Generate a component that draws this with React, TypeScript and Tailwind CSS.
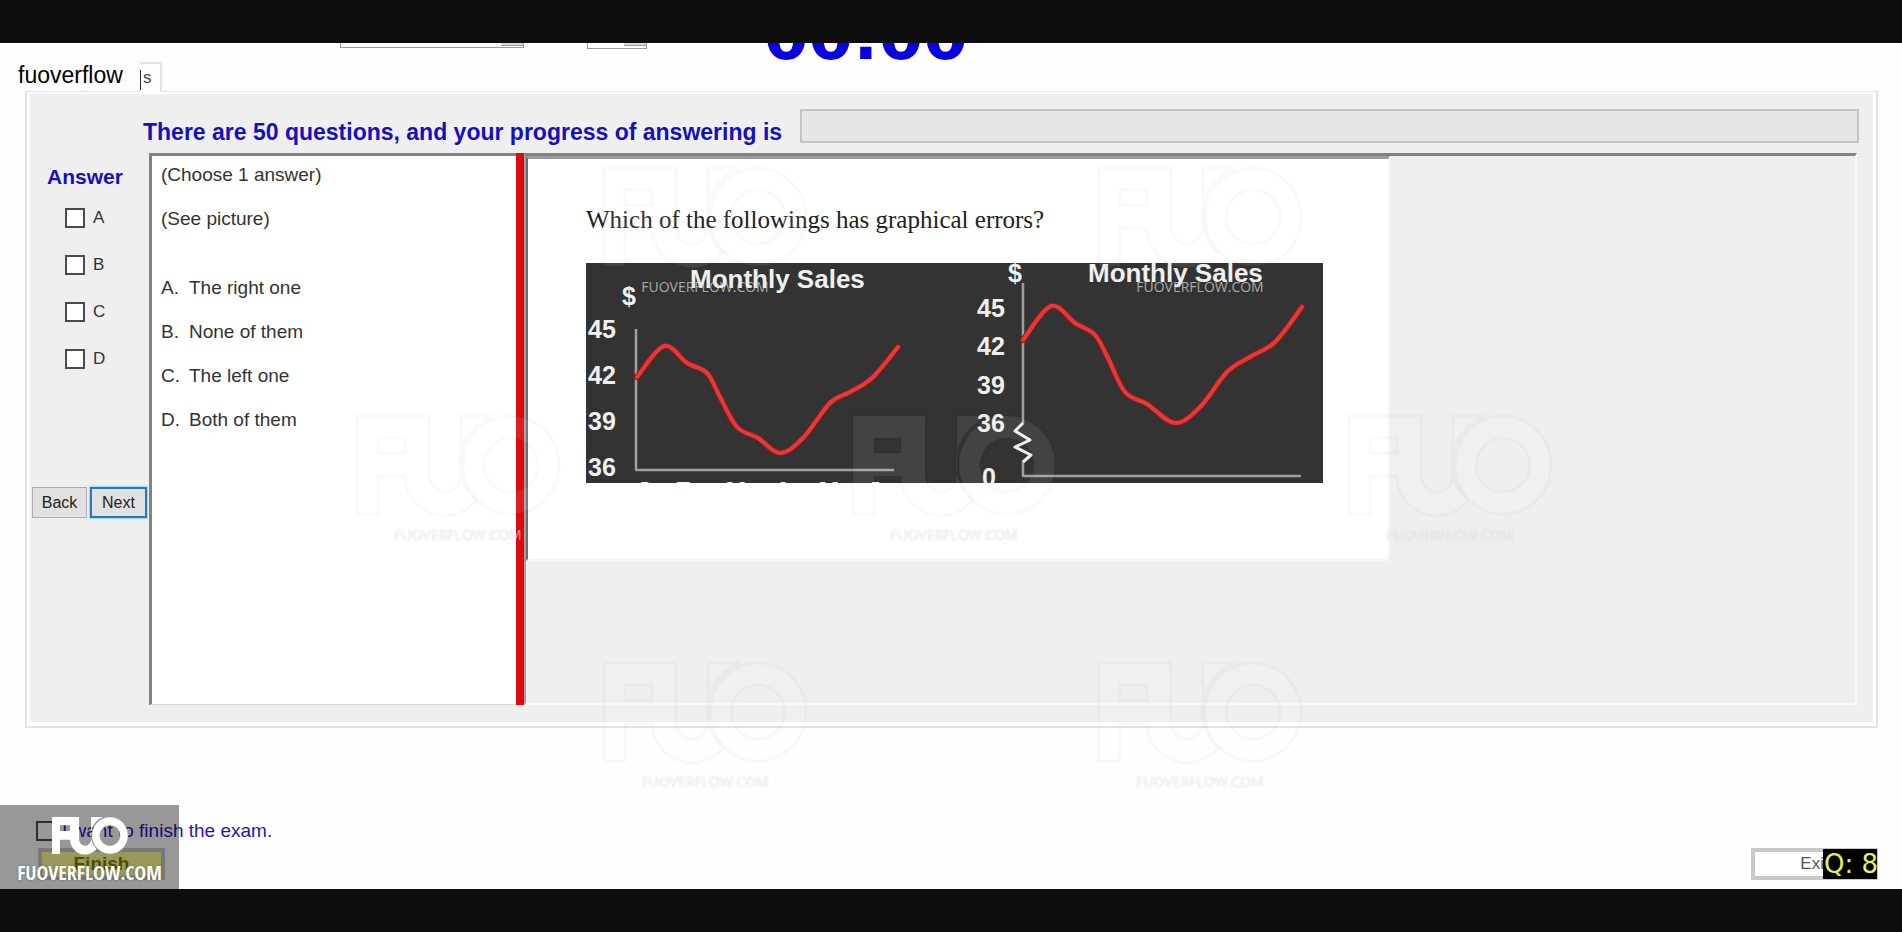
import React from "react";

type Point = [number, number];

const leftSeries: Point[] = [
  [51, 114], [78, 83], [101, 100], [121, 110], [134, 134], [151, 164], [172, 175],
  [194, 190], [217, 175], [244, 140], [264, 129], [286, 115], [312, 84],
];

const rightSeries: Point[] = [
  [437, 77], [465, 43], [489, 60], [509, 72], [522, 95], [539, 129], [561, 141],
  [589, 160], [614, 144], [641, 109], [664, 94], [689, 79], [716, 44],
];

const months: [string, number][] = [
  ["J", 57], ["F", 97], ["M", 150], ["A", 197], ["M", 243], ["J", 288],
];

const watermarks = [
  { left: 604, top: 125 },
  { left: 1099, top: 125 },
  { left: 357, top: 373 },
  { left: 853, top: 373 },
  { left: 1349, top: 373 },
  { left: 604, top: 620 },
  { left: 1099, top: 620 },
];

const choices = [
  ["A.", "The right one"],
  ["B.", "None of them"],
  ["C.", "The left one"],
  ["D.", "Both of them"],
];

function smooth(points: Point[]) {
  let d = `M${points[0][0]} ${points[0][1]}`;
  for (let i = 0; i < points.length - 1; i++) {
    const a = points[Math.max(i - 1, 0)];
    const b = points[i];
    const c = points[i + 1];
    const e = points[Math.min(i + 2, points.length - 1)];
    d += ` C${b[0] + (c[0] - a[0]) / 6} ${b[1] + (c[1] - a[1]) / 6} ${c[0] - (e[0] - b[0]) / 6} ${c[1] - (e[1] - b[1]) / 6} ${c[0]} ${c[1]}`;
  }
  return d;
}

const FU_PATH =
  "M0 0H72V58A16 18 0 0 0 104 58V0H136A51 51 0 0 0 119 85A40 40 0 0 1 48 60H21V98H0ZM21 22V37H48V22Z";
const O_PATH =
  "M154 0A48 49 0 0 1 154 98A48 49 0 0 1 154 0ZM154 22A27 27 0 0 0 154 76A27 27 0 0 0 154 22Z";

function Watermark({ left, top }: { left: number; top: number }) {
  return (
    <div className="absolute w-[202px]" style={{ left, top }}>
      <svg viewBox="0 0 202 98" className="block h-[98px] w-[202px] overflow-visible" aria-hidden="true">
        <g fill="#fff" fillOpacity="0.08" fillRule="evenodd" stroke="#000" strokeOpacity="0.025" strokeWidth="3">
          <path d={FU_PATH} />
          <path d={O_PATH} />
        </g>
      </svg>
      <p className="mt-[11px] text-center font-['Open_Sans',sans-serif] text-[14px] leading-5 font-medium text-white/60 [text-shadow:0_0_2px_rgba(0,0,0,0.16)]">
        FUOVERFLOW.COM
      </p>
    </div>
  );
}

function Chart() {
  return (
    <svg
      viewBox="0 0 737 220"
      role="img"
      aria-label="Two monthly sales charts"
      className="block h-[220px] w-[737px] bg-[#333333] font-['Liberation_Sans',Arial,sans-serif]"
    >
      <g fill="#f0f0f0" fontWeight="bold" fontSize="25">
        <text x="104" y="25" fontSize="26">Monthly Sales</text>
        <text x="36" y="42">$</text>
        <text x="2" y="75">45</text>
        <text x="2" y="121">42</text>
        <text x="2" y="167">39</text>
        <text x="2" y="213">36</text>
        {months.map(([m, x]) => (
          <text key={x} x={x} y="237" textAnchor="middle">{m}</text>
        ))}
        <text x="502" y="19" fontSize="26">Monthly Sales</text>
        <text x="422" y="19">$</text>
        <text x="391" y="54">45</text>
        <text x="391" y="92">42</text>
        <text x="391" y="131">39</text>
        <text x="391" y="169">36</text>
        <text x="396" y="223">0</text>
      </g>
      <g fill="none" stroke="#a0a0a0" strokeWidth="2.5" strokeLinejoin="round">
        <path d="M50 66V207H308" />
        <path d="M437 20V161M437 198V213H715" />
        <path d="M437 160L429 168L444 177L429 184L445 192L437 199" stroke="#f0f0f0" strokeWidth="3" />
      </g>
      <g fill="none" strokeLinecap="round">
        <g stroke="#8f1a1a" strokeWidth="6">
          <path d={smooth(leftSeries)} />
          <path d={smooth(rightSeries)} />
        </g>
        <g stroke="#e23a3a" strokeWidth="4">
          <path d={smooth(leftSeries)} />
          <path d={smooth(rightSeries)} />
        </g>
      </g>
    </svg>
  );
}

function TopStrip() {
  return (
    <div className="flex h-[19px] items-start overflow-hidden pl-[340px]">
      <div className="flex h-[5px] w-[184px] justify-end border border-t-0 border-[#9a9a9a] bg-white">
        <span className="h-[3px] w-[22px] border-b border-[#9a9a9a] bg-[#d8d8d8]" />
      </div>
      <div className="ml-[63px] flex h-[6px] w-[60px] justify-end border border-t-0 border-[#9a9a9a] bg-white">
        <span className="h-[3px] w-[22px] border-b border-[#9a9a9a] bg-[#d8d8d8]" />
      </div>
      <div className="ml-[117px] flex h-[19px] items-end">
        <time className="font-['DejaVu_Sans',sans-serif] text-[64px] leading-[50px] font-bold text-[#0a00e0]">00:00</time>
      </div>
    </div>
  );
}

function TabRow() {
  return (
    <div className="flex h-[29px] items-stretch pl-[18px]">
      <span className="w-[122px] text-[23px] leading-[26px] text-black">fuoverflow</span>
      <button
        type="button"
        className="relative z-10 -mb-px w-[22px] border-t-2 border-r-2 border-[#e2e2e2] bg-white pl-[3px] text-left text-[17px] leading-[24px] text-[#444]"
      >
        <span className="absolute top-[6px] left-0 h-5 w-px bg-[#222]" />s
      </button>
    </div>
  );
}

function AnswerColumn() {
  return (
    <div className="flex w-[119px] flex-col">
      <h2 className="mt-3 pl-[17px] text-[21px] leading-6 font-bold text-[#1410c0]">Answer</h2>
      <div className="mt-[19px] flex flex-col gap-[27px] pl-[35px]">
        {["A", "B", "C", "D"].map((letter) => (
          <label key={letter} className="flex h-5 items-center gap-2 text-[17px] leading-5 text-[#333]">
            <input type="checkbox" className="size-5 appearance-none border-2 border-[#4a4a4a] bg-white" />
            <span>{letter}</span>
          </label>
        ))}
      </div>
      <div className="mt-[118px] flex gap-[3px] px-[2px]">
        <button type="button" className="h-[31px] flex-1 border border-[#adadad] bg-[#e1e1e1] text-base text-[#222]">
          Back
        </button>
        <button
          type="button"
          className="h-[31px] flex-1 border-2 border-[#2878b8] bg-[#e1e1e1] text-base text-[#222] shadow-[0_0_1px_1px_#a6dcfa]"
        >
          Next
        </button>
      </div>
    </div>
  );
}

function QuestionText() {
  return (
    <section className="w-[367px] border-t-3 border-l-3 border-b border-[#828282] border-b-[#dcdcdc] bg-white pl-[9px] text-[19px] leading-[22px] text-[#333]">
      <p className="mt-[8px]">(Choose 1 answer)</p>
      <p className="mt-[22px]">(See picture)</p>
      <ol className="mt-[47px] flex flex-col gap-[22px]">
        {choices.map(([mark, text]) => (
          <li key={mark} className="flex">
            <span className="w-[28px]">{mark}</span>
            <span>{text}</span>
          </li>
        ))}
      </ol>
    </section>
  );
}

function PictureArea() {
  return (
    <section className="flex-1 border-t-3 border-r-2 border-b-2 border-l-2 border-t-[#828282] border-r-[#f8f8f8] border-b-[#f8f8f8] border-l-[#a0a0a0] bg-[#efefef]">
      <div className="h-[405px] w-[864px] border-t-3 border-r-2 border-b-2 border-l-2 border-t-[#9a9a9a] border-r-[#f6f6f6] border-b-[#f6f6f6] border-l-[#6e6e6e] bg-white pl-[58px]">
        <p className="mt-[46px] mb-[28px] font-['Liberation_Serif','Times_New_Roman',serif] text-[25px] leading-[30px] text-[#222]">
          Which of the followings has graphical errors?
        </p>
        <Chart />
      </div>
    </section>
  );
}

function ExamPanel() {
  return (
    <div className="mr-6 ml-[25px] border-2 border-t border-[#e2e2e2]">
      <div className="border-x-3 border-t-2 border-b-4 border-white bg-[#efefef] pb-[17px]">
        <div className="flex pt-[15px] pr-[14px] pl-[113px]">
          <h1 id="progress-label" className="mr-[18px] pt-[12px] text-[23px] leading-[22px] font-bold whitespace-nowrap text-[#1410c0]">
            There are 50 questions, and your progress of answering is
          </h1>
          <div
            role="progressbar"
            aria-labelledby="progress-label"
            aria-valuenow={0}
            className="h-[34px] flex-1 border-2 border-[#c4c4c4] bg-[#e6e6e6]"
          />
        </div>
        <div className="mt-[10px] flex h-[552px] pr-4">
          <AnswerColumn />
          <QuestionText />
          <div className="w-2 bg-[#e00a0e]" />
          <PictureArea />
        </div>
      </div>
    </div>
  );
}

function Brand() {
  return (
    <div className="absolute bottom-0 left-0 flex h-[84px] w-[179px] flex-col items-center bg-black/40 pt-[12px]">
      <svg viewBox="0 0 202 98" className="h-[37px] w-[76px] overflow-visible" aria-hidden="true">
        <g fill="#fff" fillRule="evenodd">
          <path d={FU_PATH} />
          <path d={O_PATH} stroke="#999" strokeWidth="1" />
        </g>
      </svg>
      <p className="mt-[7px] font-['Liberation_Sans_Narrow','Open_Sans_Condensed','Liberation_Sans',sans-serif] text-[20px] leading-[24px] font-bold text-white [text-shadow:0_0_2px_rgba(0,0,0,0.4)]">
        FUOVERFLOW.COM
      </p>
    </div>
  );
}

function Footer() {
  return (
    <div className="flex flex-1 items-end justify-between pr-6 pb-[9px] pl-9">
      <div className="flex flex-col items-start">
        <label className="flex items-center gap-[6px] text-[19px] leading-[22px] text-[#2a14b4]">
          <input type="checkbox" className="size-5 appearance-none border-2 border-[#4a4a4a] bg-white" />
          I want to finish the exam.
        </label>
        <button
          type="button"
          className="mt-[6px] ml-[2px] h-[32px] w-[127px] border-4 border-[#c8c8c8] bg-[#ffff98] text-[19px] leading-[22px] font-bold text-[#808400]"
        >
          Finish
        </button>
      </div>
      <div className="relative">
        <button type="button" className="block h-[32px] w-[127px] border-4 border-[#c8c8c8] bg-white text-[17px] leading-[22px] text-[#555]">
          Exit
        </button>
        <output className="absolute top-px right-px h-[30px] w-[54px] bg-black pl-px font-['DejaVu_Sans',sans-serif] text-[26px] leading-[30px] whitespace-pre text-[#e4f05a]">
          Q: 8
        </output>
      </div>
    </div>
  );
}

export default function App() {
  return (
    <div className="flex min-h-screen flex-col bg-[#0e0e0e] py-[43px] font-['Liberation_Sans',Arial,sans-serif]">
      <main className="relative flex flex-1 flex-col overflow-hidden bg-[#fefefe]">
        <TopStrip />
        <TabRow />
        <ExamPanel />
        <Footer />
        <div className="pointer-events-none absolute inset-0 z-20">
          {watermarks.map((w) => (
            <Watermark key={`${w.left}-${w.top}`} left={w.left} top={w.top} />
          ))}
          <Brand />
        </div>
      </main>
    </div>
  );
}
